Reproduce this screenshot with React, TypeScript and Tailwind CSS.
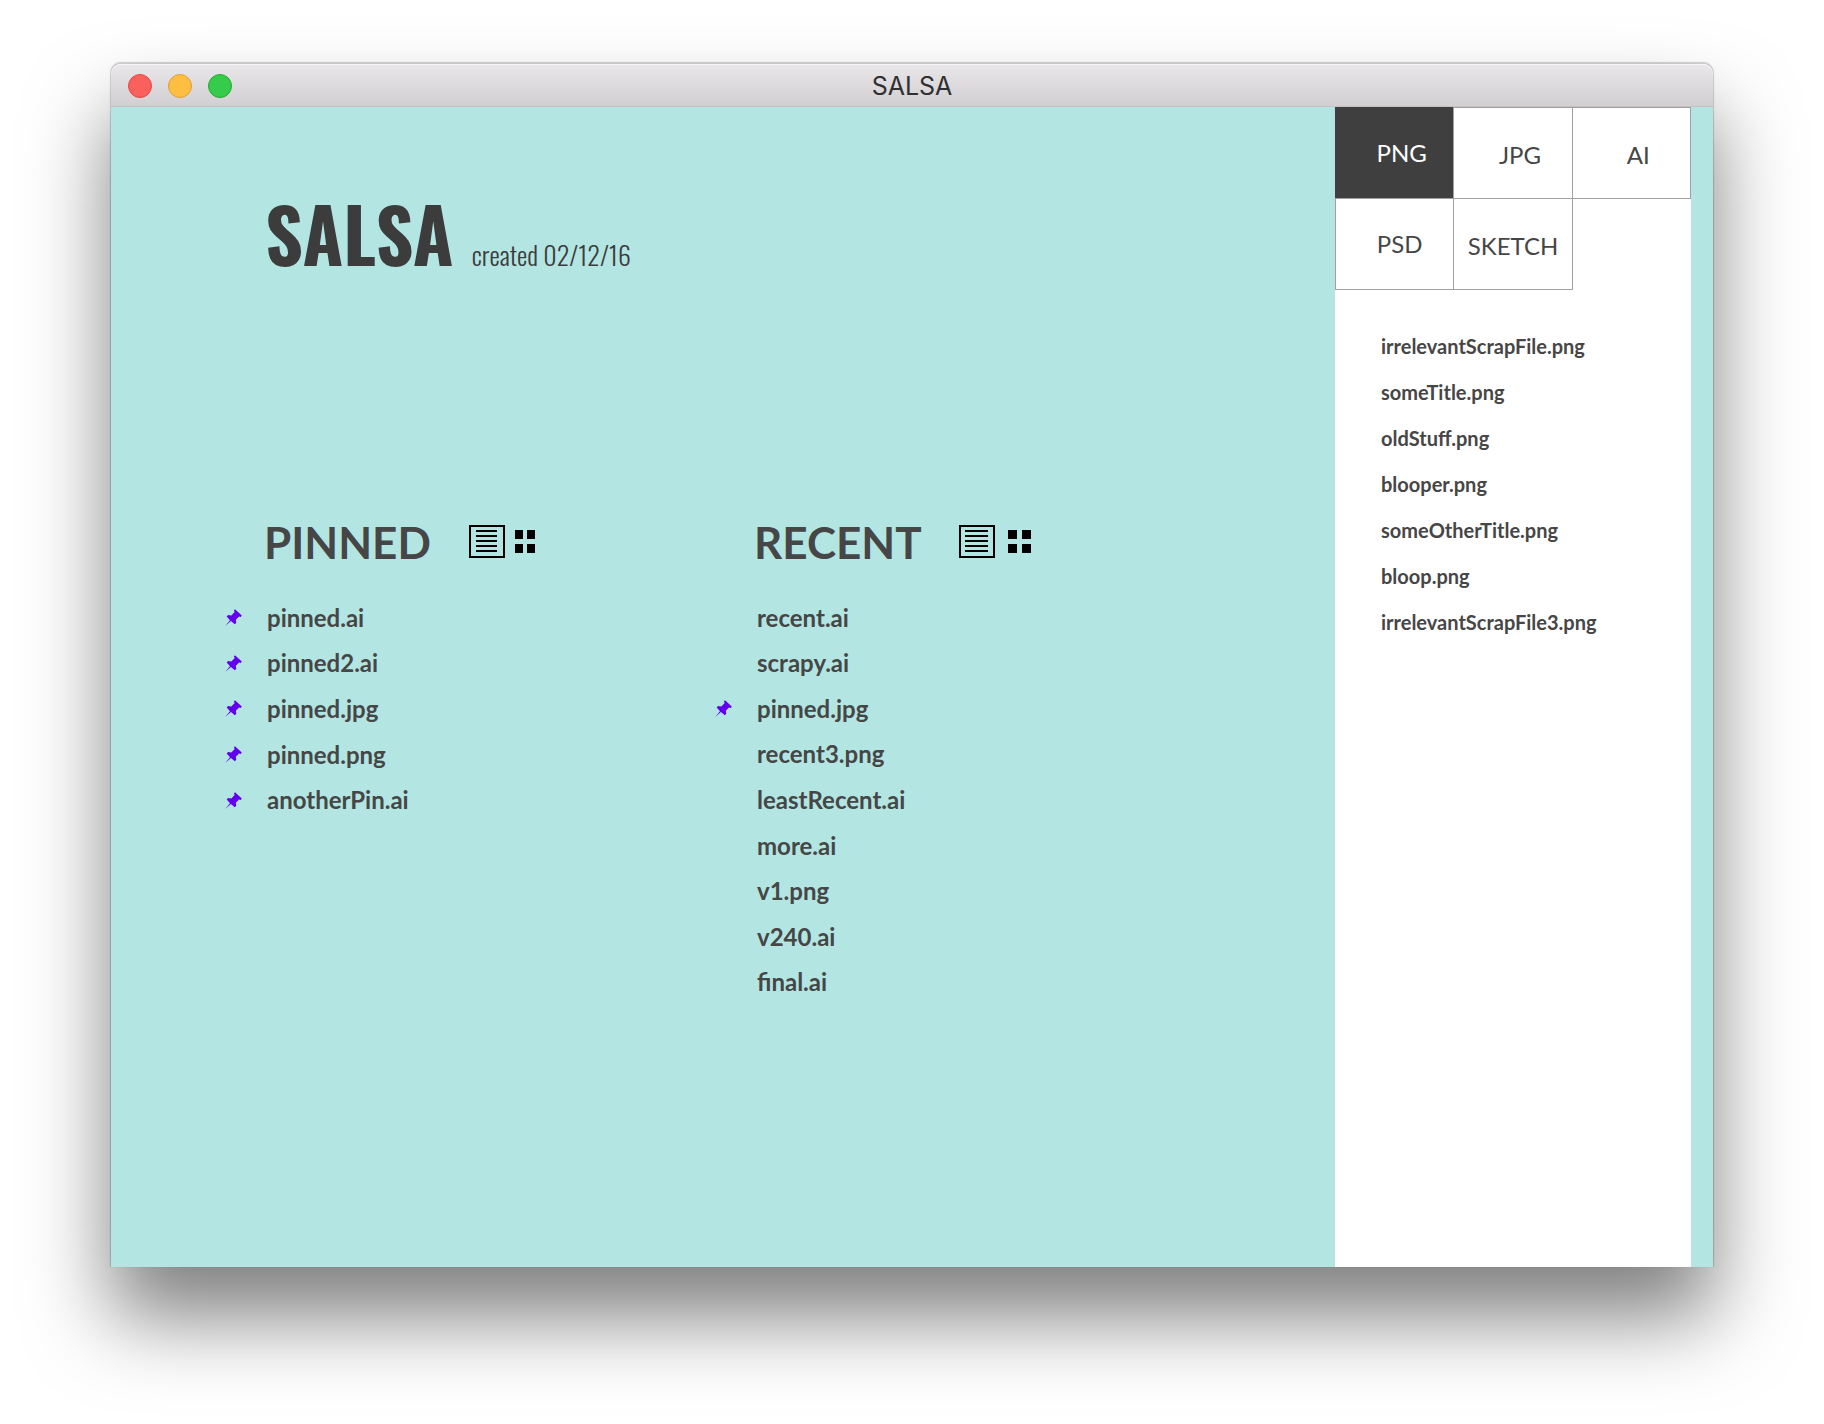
type FileEntry = { name: string; pinned?: boolean };

const pinnedFiles: FileEntry[] = [
  { name: "pinned.ai", pinned: true },
  { name: "pinned2.ai", pinned: true },
  { name: "pinned.jpg", pinned: true },
  { name: "pinned.png", pinned: true },
  { name: "anotherPin.ai", pinned: true },
];

const recentFiles: FileEntry[] = [
  { name: "recent.ai" },
  { name: "scrapy.ai" },
  { name: "pinned.jpg", pinned: true },
  { name: "recent3.png" },
  { name: "leastRecent.ai" },
  { name: "more.ai" },
  { name: "v1.png" },
  { name: "v240.ai" },
  { name: "final.ai" },
];

const scrapFiles = [
  "irrelevantScrapFile.png",
  "someTitle.png",
  "oldStuff.png",
  "blooper.png",
  "someOtherTitle.png",
  "bloop.png",
  "irrelevantScrapFile3.png",
];

const fileTypes = [
  { label: "PNG", style: "border-[#3f3f3f] bg-[#3f3f3f] pl-3.5 text-white" },
  { label: "JPG", style: "border-[#a0a0a0] bg-white pl-3.5 pt-1" },
  { label: "AI", style: "border-[#a0a0a0] bg-white pl-3.5 pt-1" },
  { label: "PSD", style: "border-[#a0a0a0] bg-white pl-2.5" },
  { label: "SKETCH", style: "border-[#a0a0a0] bg-white pt-1" },
];

function PinIcon() {
  return (
    <svg viewBox="0 0 16 16" className="size-[17px]" fill="#6200ee" role="img" aria-label="Pinned">
      <path d="M9.4.2 15.8 6.2 14.8 7.6 13.2 7 10.2 10 10.6 13 9.2 14.4 5.6 11.4.2 15.9 4.7 10.5 1.6 7 2.9 5.6 6 6 9.1 2.9 8.4 1.4Z" />
    </svg>
  );
}

function ListIcon({ wide }: { wide?: boolean }) {
  const left = wide ? 6 : 7;
  const right = wide ? 29 : 28;
  return (
    <svg viewBox="0 0 36 33" className="h-[33px] w-9" fill="none" stroke="#000" strokeWidth="2">
      <rect x="1" y="1" width="34" height="31" />
      {[6, 11, 16, 21, 26].map((y) => (
        <path key={y} d={`M${left} ${y}H${right}`} />
      ))}
    </svg>
  );
}

function GridIcon({ wide }: { wide?: boolean }) {
  const cell = wide ? 9 : 8;
  const second = wide ? 14 : 12;
  return (
    <svg viewBox="0 0 23 23" className="size-[23px]" fill="#000">
      <rect x="0" y="0" width={cell} height="9" />
      <rect x={second} y="0" width={cell} height="9" />
      <rect x="0" y="14" width={cell} height="9" />
      <rect x={second} y="14" width={cell} height="9" />
    </svg>
  );
}

function FileSection({
  title,
  files,
  listClass,
  wide,
}: {
  title: string;
  files: FileEntry[];
  listClass: string;
  wide?: boolean;
}) {
  return (
    <section>
      <div className="flex h-[47px] items-center pl-[39px]">
        <h2 className="w-[205px] text-[44px] leading-[46px] font-bold">{title}</h2>
        <div className={wide ? "flex items-center gap-[13px]" : "flex items-center gap-[10px]"}>
          <button type="button" aria-label={`${title} as list`}>
            <ListIcon wide={wide} />
          </button>
          <button type="button" aria-label={`${title} as grid`}>
            <GridIcon wide={wide} />
          </button>
        </div>
      </div>
      <ul className={listClass}>
        {files.map((file) => (
          <li key={file.name} className="flex items-center">
            <span className="w-[42px]">{file.pinned && <PinIcon />}</span>
            <a href="#" className="text-2xl font-bold">
              {file.name}
            </a>
          </li>
        ))}
      </ul>
    </section>
  );
}

export default function App() {
  return (
    <div className="min-h-screen bg-white px-[111px] pt-16 pb-[157px] font-['Lato',sans-serif] text-[#464646]">
      <div className="flex min-h-[1203px] flex-col rounded-t-[10px] shadow-[0_50px_82px_rgba(0,0,0,0.5),0_-1px_1px_1px_rgba(0,0,0,0.18)]">
        <header className="grid h-[43px] grid-cols-[1fr_auto_1fr] items-center rounded-t-[10px] border-b border-[#c4c0c4] bg-linear-to-b from-[#e9e7ea] to-[#d1cfd2] px-[17px] pt-px shadow-[inset_0_1px_0_#f6f5f6]">
          <div className="flex gap-4">
            <button type="button" aria-label="Close" className="size-6 rounded-full border border-[#e24744] bg-[#fc605c]" />
            <button type="button" aria-label="Minimize" className="size-6 rounded-full border border-[#dfa034] bg-[#fdbe41]" />
            <button type="button" aria-label="Zoom" className="size-6 rounded-full border border-[#27a934] bg-[#35cb4b]" />
          </div>
          <p className="font-['Inter',sans-serif] text-[25px] leading-8 text-[#303030]">SALSA</p>
        </header>

        <div className="flex flex-1 bg-[#b3e6e3] pr-[22px]">
          <main className="flex-1 pl-[114px]">
            <div className="flex items-baseline gap-[18px] pt-[90px] pl-10 font-['Oswald','Roboto_Condensed',sans-serif] text-[#3c3c3c]">
              <h1 className="text-[74px] leading-[72px] font-bold">SALSA</h1>
              <p className="text-[26px] leading-9 font-light">created 02/12/16</p>
            </div>
            <div className="grid grid-cols-[490px_1fr] items-start pt-[245px]">
              <FileSection title="PINNED" files={pinnedFiles} listClass="mt-[30px] grid h-[228px] auto-rows-fr" />
              <FileSection title="RECENT" files={recentFiles} listClass="mt-[30px] grid h-[410px] auto-rows-fr" wide />
            </div>
          </main>

          <aside className="w-[356px] bg-white">
            <div className="grid auto-rows-[91px] grid-cols-3 pr-px">
              {fileTypes.map((type) => (
                <button
                  key={type.label}
                  type="button"
                  className={`-mr-px -mb-px border text-2xl ${type.style}`}
                >
                  {type.label}
                </button>
              ))}
            </div>
            <ul className="pt-[34px] pl-[46px]">
              {scrapFiles.map((name) => (
                <li key={name} className="flex h-[46px] items-center">
                  <a href="#" className="text-xl font-bold">
                    {name}
                  </a>
                </li>
              ))}
            </ul>
          </aside>
        </div>
      </div>
    </div>
  );
}
